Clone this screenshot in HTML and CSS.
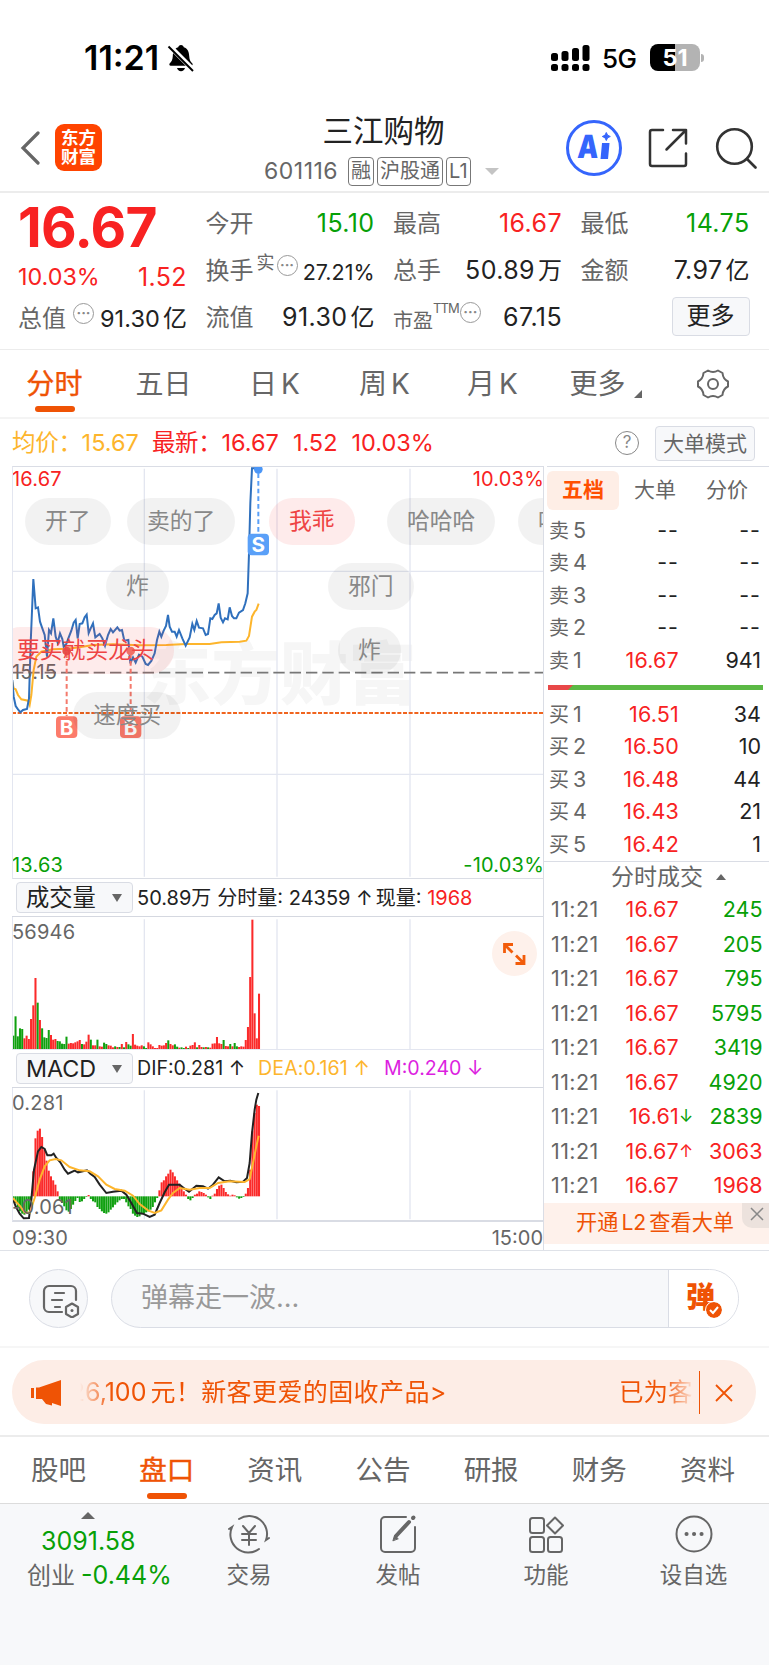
FILE: index.html
```html
<!DOCTYPE html>
<html lang="zh-CN">
<head>
    <meta charset="UTF-8">
    <meta name="viewport" content="width=device-width, initial-scale=1.0">
    <title>三江购物 601116</title>
    <link rel="stylesheet" href="styles.css">
</head>
<body>
    <div class="status-bar">
        <span class="clock">11:21</span>
        <svg class="bell" width="28" height="28" viewBox="0 0 28 28">
            <path d="M14 1c1.600 0 2.600 1 2.800 2.300C20.700 4.600 22 8 22.200 12c.2 4 1.200 5.500 3 7.300.9 1 .4 2.500-1 2.500H3.800c-1.400 0-1.900-1.500-1-2.500 1.800-1.800 2.800-3.300 3-7.300C6 8 7.300 4.600 11.200 3.300 11.400 2 12.400 1 14 1z"/>
            <path d="M10 24h8c-.5 2-2 3.200-4 3.200S10.500 26 10 24z"/>
            <path d="M2 1.500L27 26.500" stroke="#fff" stroke-width="5"/>
            <path d="M1.500 2.500L26 27" stroke="#000" stroke-width="2"/>
        </svg>
        <svg class="signal" width="40" height="28" viewBox="0 0 40 28">
            <rect x="1" y="9" width="7" height="8" rx="2.500"/>
            <rect x="11.500" y="7" width="7" height="10" rx="2.500"/>
            <rect x="22" y="4" width="7" height="13" rx="2.500"/>
            <rect x="32.500" y="1" width="7" height="16" rx="2.500"/>
            <rect x="1" y="20" width="7" height="7" rx="2.500"/>
            <rect x="11.500" y="20" width="7" height="7" rx="2.500"/>
            <rect x="22" y="20" width="7" height="7" rx="2.500"/>
            <rect x="32.500" y="20" width="7" height="7" rx="2.500"/>
        </svg>
        <span class="network">5G</span>
        <span class="battery">51</span>
        <span class="battery-tip"></span>
    </div>

    <header class="header">
        <svg class="back" width="20" height="34" viewBox="0 0 20 34"><path d="M18 2L3 17l15 15" fill="none" stroke="#666" stroke-width="3.200" stroke-linecap="round"/></svg>
        <div class="logo">东方<br>财富</div>
        <div class="stock">
            <h1>三江购物</h1>
            <div class="stock-code">
                <span class="code">601116</span>
                <span class="tag">融</span>
                <span class="tag">沪股通</span>
                <span class="tag">L1</span>
                <i class="down"></i>
            </div>
        </div>
        <svg class="ai" width="58" height="58" viewBox="0 0 58 58">
            <circle cx="29" cy="29" r="26.500" fill="#fff" stroke="#3565fc" stroke-width="3"/>
            <text x="14" y="39" class="ai-text" textLength="21" lengthAdjust="spacingAndGlyphs" transform="skewX(-3)">A</text>
            <path d="M37 24h7.500l-1.500 16h-7.500z" fill="#3565fc"/>
            <path d="M41.300 13.500l1.300 2.700 2.700 1.300-2.700 1.300-1.300 2.700-1.300-2.700-2.700-1.300 2.700-1.300z" fill="#3565fc" stroke="#3565fc"/>
        </svg>
        <svg class="share" width="40" height="40" viewBox="0 0 40 40" fill="none" stroke="#333" stroke-width="2.500" stroke-linecap="round" stroke-linejoin="round">
            <path d="M15 2H4a2 2 0 0 0-2 2v32a2 2 0 0 0 2 2h32a2 2 0 0 0 2-2V25.500"/>
            <path d="M25 2h13v13.500M38 2L18.500 21.500"/>
        </svg>
        <svg class="search" width="42" height="42" viewBox="0 0 42 42" fill="none" stroke="#333" stroke-width="2.600" stroke-linecap="round">
            <circle cx="19.500" cy="19.500" r="17.300"/>
            <path d="M32 32l8.500 8.500"/>
        </svg>
    </header>

    <section class="quote">
        <div class="quote-col main-col">
            <div class="price">16.67</div>
            <div class="row red change"><span>10.03%</span><span class="val">1.52</span></div>
            <div class="row total"><label>总值</label><i class="more-dot">···</i><span class="val sm">91.30<b>亿</b></span></div>
        </div>
        <div class="quote-col">
            <div class="row"><label>今开</label><span class="val green">15.10</span></div>
            <div class="row"><label>换手</label><sup>实</sup><i class="more-dot">···</i><span class="val xs">27.21%</span></div>
            <div class="row"><label>流值</label><span class="val">91.30<b>亿</b></span></div>
        </div>
        <div class="quote-col">
            <div class="row"><label>最高</label><span class="val red">16.67</span></div>
            <div class="row"><label>总手</label><span class="val">50.89<b>万</b></span></div>
            <div class="row"><label class="small">市盈</label><sup class="ttm">TTM</sup><i class="more-dot">···</i><span class="val">67.15</span></div>
        </div>
        <div class="quote-col">
            <div class="row"><label>最低</label><span class="val green">14.75</span></div>
            <div class="row"><label>金额</label><span class="val">7.97<b>亿</b></span></div>
            <div class="row"><button class="btn more-btn">更多</button></div>
        </div>
    </section>

    <nav class="period">
        <span class="active">分时</span>
        <span>五日</span>
        <span>日<b>K</b></span>
        <span>周<b>K</b></span>
        <span>月<b>K</b></span>
        <span class="more">更多</span>
        <svg width="34" height="32" viewBox="0 0 34 32" fill="none" stroke="#666" stroke-width="2" stroke-linejoin="round">
            <path d="M12 2.500q5 3 10 0l4.500 2.500q.5 6 5.500 8.500v5q-5 2.500-5.500 8.500L22 29.500q-5-3-10 0L7.500 27Q7 21 2 18.500v-5Q7 11 7.500 5z"/>
            <circle cx="17" cy="16" r="5"/>
        </svg>
    </nav>

    <div class="summary">
        <span class="avg">均价：</span><span class="avg avg-val">15.67</span>
        <span class="red latest">最新：</span><span class="red">16.67</span><span class="red">1.52</span><span class="red">10.03%</span>
        <i class="help">?</i>
        <button class="btn mode-btn">大单模式</button>
    </div>

    <main class="board">
        <div class="charts">
            <div class="chart price-chart">
                <span class="watermark">东方财富</span>
                <!-- drawn at three units per pixel -->
                <svg width="531" height="412" viewBox="37 18 1593 1236" fill="none">
                    <path d="M434 26V1250M832 26V1250M1231 26V1250M37 334H1630M37 943H1630" stroke="#e3e6f0" stroke-width="4"/>
                    <path d="M37 759H1630" stroke="#f0641e" stroke-width="6" stroke-dasharray="12 5"/>
                    <path d="M37 638H1630" stroke="#777" stroke-width="5" stroke-dasharray="34 15"/>
                    <polyline stroke="#fdb52c" stroke-width="6" points="38,665 42,685 48,688 55,705 65,718 85,722 90,735 95,705 102,630 110,590 125,575 160,568 200,566 240,562 280,555 340,553 420,556 500,555 560,552 630,552 665,547 720,545 740,542 748,528 757,470 765,455 770,450 777,431"/>
                    <polyline stroke="#2f70bd" stroke-width="6" points="38,660 42,710 48,738 55,748 62,757 70,750 82,747 88,715 93,550 101,357 108,445 115,442 121,485 128,505 135,525 142,590 148,510 154,520 161,475 168,530 174,548 181,520 188,537 192,560 200,552 206,535 215,512 222,488 228,480 234,535 240,492 248,490 255,472 261,464 267,519 273,505 280,490 287,532 300,522 308,535 316,557 325,525 333,507 340,517 353,502 360,512 367,510 374,542 386,540 392,610 400,592 408,608 418,584 428,590 438,612 445,615 455,603 465,580 472,540 479,515 485,530 492,512 499,498 505,465 510,500 517,515 525,515 531,530 538,510 548,535 558,557 570,532 578,492 584,510 591,483 598,503 610,505 618,525 625,522 632,475 638,477 645,465 651,460 657,430 663,473 670,487 676,475 684,478 690,442 697,468 703,475 710,475 718,458 730,450 737,430 744,400 748,280 752,130 757,25 776,25"/>
                    <path d="M776 40V220" stroke="#5aa0f8" stroke-width="6" stroke-dasharray="14 9"/>
                    <circle cx="776" cy="28" r="13" fill="#4b96f7"/>
                    <path d="M201 580V768M393 580V768" stroke="#f47a6c" stroke-width="6" stroke-dasharray="14 9"/>
                    <circle cx="201" cy="573" r="13" fill="#e5544d"/>
                    <circle cx="393" cy="573" r="13" fill="#f0776c"/>
                    <g class="mark">
                        <rect x="744" y="221" width="64" height="65" rx="12" fill="#5aa0f8"/>
                        <rect x="169" y="769" width="64" height="65" rx="12" fill="#fc7b6b"/>
                        <rect x="361" y="769" width="64" height="65" rx="12" fill="#fc7b6b"/>
                        <text x="776" y="277">S</text>
                        <text x="201" y="825">B</text>
                        <text x="393" y="825">B</text>
                    </g>
                </svg>
                <span class="lab top-left red">16.67</span>
                <span class="lab top-right red">10.03%</span>
                <span class="lab mid-left">15.15</span>
                <span class="lab bottom-left green">13.63</span>
                <span class="lab bottom-right green">-10.03%</span>
                <span class="danmu d1">开了</span>
                <span class="danmu d2">卖的了</span>
                <span class="danmu d3 hot">我乖</span>
                <span class="danmu d4">哈哈哈</span>
                <span class="danmu d5">哈哈</span>
                <span class="danmu d6">炸</span>
                <span class="danmu d7">邪门</span>
                <span class="danmu d8 hot">要买就买龙头</span>
                <span class="danmu d9">炸</span>
                <span class="danmu d10">速度买</span>
            </div>

            <div class="indicator">
                <span class="select">成交量<i></i></span>
                <span>50.89<b>万</b></span><span class="gap">分时量: 24359 ↑</span><span class="gap now">现量: <em class="red">1968</em></span>
            </div>
            <div class="chart sub-chart">
                <svg width="531" height="133" viewBox="37 141 1593 399">
                    <path d="M434 148V537M832 148V537M1231 148V537" stroke="#e3e6f0" stroke-width="4"/>
                    <g id="volume"></g>
                </svg>
                <span class="lab top-left">56946</span>
                <span class="expand">
                    <svg width="24" height="24" viewBox="0 0 24 24" fill="none" stroke="#f25c0a" stroke-width="2.800"><path d="M2.500 11V2.500H11M2.500 2.500l8 8M22 13v8.500h-8.500M22 21.500l-8-8"/></svg>
                </span>
            </div>

            <div class="indicator macd">
                <span class="select">MACD<i></i></span>
                <span>DIF:0.281 ↑</span><span class="dea">DEA:0.161 ↑</span><span class="m">M:0.240 ↓</span>
            </div>
            <div class="chart sub-chart last">
                <svg width="531" height="133" viewBox="37 655 1593 399" fill="none">
                    <path d="M434 662V1049M832 662V1049M1231 662V1049" stroke="#e3e6f0" stroke-width="4"/>
                    <g id="macd"></g>
                    <polyline stroke="#222" stroke-width="6" points="39,985 48,1010 60,1032 72,1046 88,1045 95,990 103,900 115,845 125,832 135,838 143,857 155,857 162,852 170,865 182,878 195,900 205,912 225,903 235,908 262,902 272,912 285,922 300,945 320,970 340,966 365,963 380,975 395,1000 412,1030 430,1032 450,1042 465,1035 480,1000 495,968 508,945 540,945 555,957 568,966 590,948 610,950 625,957 640,945 657,923 675,935 692,933 710,938 730,936 742,925 750,880 757,790 765,720 770,690 776,670"/>
                    <polyline stroke="#fdb52c" stroke-width="6" points="39,985 60,1008 75,1028 90,1030 105,985 120,930 135,890 150,872 168,868 185,872 210,892 240,902 270,905 295,920 320,945 345,958 375,963 400,978 420,1003 445,1022 465,1030 485,1022 505,990 520,970 540,955 570,960 600,955 630,955 655,940 690,935 735,937 750,928 760,880 770,830 777,798"/>
                </svg>
                <span class="lab top-left">0.281</span>
                <span class="lab bottom-left">-0.061</span>
            </div>
            <div class="axis"><span>09:30</span><span>15:00</span></div>
        </div>

        <aside class="depth">
            <div class="depth-tabs"><span class="active">五档</span><span>大单</span><span>分价</span></div>
            <div class="level"><span>卖<b>5</b></span><span class="none">--</span><span class="none">--</span></div>
            <div class="level"><span>卖<b>4</b></span><span class="none">--</span><span class="none">--</span></div>
            <div class="level"><span>卖<b>3</b></span><span class="none">--</span><span class="none">--</span></div>
            <div class="level"><span>卖<b>2</b></span><span class="none">--</span><span class="none">--</span></div>
            <div class="level"><span>卖<b>1</b></span><span class="red">16.67</span><span>941</span></div>
            <div class="ratio"><i></i></div>
            <div class="level"><span>买<b>1</b></span><span class="red">16.51</span><span>34</span></div>
            <div class="level"><span>买<b>2</b></span><span class="red">16.50</span><span>10</span></div>
            <div class="level"><span>买<b>3</b></span><span class="red">16.48</span><span>44</span></div>
            <div class="level"><span>买<b>4</b></span><span class="red">16.43</span><span>21</span></div>
            <div class="level"><span>买<b>5</b></span><span class="red">16.42</span><span>1</span></div>
            <div class="ticks-title">分时成交<i></i></div>
            <div class="tick"><span>11:21</span><span class="red">16.67</span><span class="green">245</span></div>
            <div class="tick"><span>11:21</span><span class="red">16.67</span><span class="green">205</span></div>
            <div class="tick"><span>11:21</span><span class="red">16.67</span><span class="green">795</span></div>
            <div class="tick"><span>11:21</span><span class="red">16.67</span><span class="green">5795</span></div>
            <div class="tick"><span>11:21</span><span class="red">16.67</span><span class="green">3419</span></div>
            <div class="tick"><span>11:21</span><span class="red">16.67</span><span class="green">4920</span></div>
            <div class="tick"><span>11:21</span><span class="red">16.61<em class="green">↓</em></span><span class="green">2839</span></div>
            <div class="tick"><span>11:21</span><span class="red">16.67<em>↑</em></span><span class="red">3063</span></div>
            <div class="tick"><span>11:21</span><span class="red">16.67</span><span class="red">1968</span></div>
            <div class="l2">开通<b>L2</b>查看大单
                <span class="l2-close"><svg width="14" height="14" viewBox="0 0 14 14" stroke="#888" stroke-width="1.500"><path d="M1 1l12 12M13 1L1 13"/></svg></span>
            </div>
        </aside>
    </main>

    <div class="comment">
        <span class="comment-set">
            <svg width="38" height="34" viewBox="0 0 38 34" fill="none" stroke="#666" stroke-width="2.200" stroke-linecap="round">
                <path d="M20 28H7a5 5 0 0 1-5-5V7a5 5 0 0 1 5-5h22a5 5 0 0 1 5 5v9"/>
                <path d="M13 9h9M10 16h10M13 23h5"/>
                <path d="M30 19.500l6 3.500v7l-6 3.500-6-3.500v-7z" stroke-linejoin="round"/>
                <circle cx="30" cy="26.500" r="1.500" fill="#666" stroke="none"/>
            </svg>
        </span>
        <div class="comment-input">
            <span class="placeholder">弹幕走一波...</span>
            <span class="send">弹<i><svg width="14" height="14" viewBox="0 0 14 14" fill="none" stroke="#fff" stroke-width="2"><path d="M3 7l3 3 5-6"/></svg></i></span>
        </div>
    </div>

    <div class="notice">
        <svg width="30" height="28" viewBox="0 0 30 28" fill="#ef5305"><path d="M0 9h3v10H0zM5 8.500h3L30 1v26l-9-3v2.500l-6-1.500-4-5H5z"/></svg>
        <span class="notice-text"><span class="cut">2</span>6,100<b>元！新客更爱的固收产品&gt;</b></span>
        <span class="notice-next">已为客户</span>
        <svg class="x" width="18" height="18" viewBox="0 0 18 18" stroke="#ef5305" stroke-width="1.800"><path d="M1 1l16 16M17 1L1 17"/></svg>
    </div>

    <nav class="tabs">
        <span>股吧</span>
        <span class="active">盘口</span>
        <span>资讯</span>
        <span>公告</span>
        <span>研报</span>
        <span>财务</span>
        <span>资料</span>
    </nav>

    <footer class="footer">
        <div class="index">
            <i></i>
            <div class="green">3091.58</div>
            <div>创业<span class="green">-0.44%</span></div>
        </div>
        <div class="action">
            <svg width="44" height="40" viewBox="0 0 44 40" fill="none" stroke="#666" stroke-width="2" stroke-linecap="round">
                <path d="M12 5A18 18 0 0 1 39 26l3-2M32 35A18 18 0 0 1 5 13l-3 2"/>
                <path d="M16 12l6 7 6-7M22 19v12M15 20h14M15 26h14"/>
            </svg>
            <span>交易</span>
        </div>
        <div class="action">
            <svg width="40" height="40" viewBox="0 0 40 40" fill="none" stroke="#666" stroke-width="2" stroke-linecap="round">
                <path d="M28 3H7a4 4 0 0 0-4 4v27a4 4 0 0 0 4 4h26a4 4 0 0 0 4-4V13"/>
                <path d="M18 22l13-14" stroke-width="4"/><path d="M15 26.500l1.500-5 3.500 3z" fill="#666" stroke-width="1"/><path d="M35.500 3.500l-.5.500" stroke-width="4"/>
            </svg>
            <span>发帖</span>
        </div>
        <div class="action">
            <svg width="40" height="40" viewBox="0 0 40 40" fill="none" stroke="#666" stroke-width="2" stroke-linejoin="round">
                <rect x="4" y="4" width="14" height="15" rx="2.500"/>
                <rect x="4" y="23" width="14" height="15" rx="2.500"/>
                <rect x="22" y="23" width="14" height="15" rx="2.500"/>
                <path d="M29 3.500l8 8-8 8-8-8z"/>
            </svg>
            <span>功能</span>
        </div>
        <div class="action">
            <svg width="40" height="40" viewBox="0 0 40 40" fill="none" stroke="#666" stroke-width="2">
                <circle cx="20" cy="20" r="17.500"/>
                <path d="M12.500 20h.1M20 20h.1M27.500 20h.1" stroke-width="4" stroke-linecap="round"/>
            </svg>
            <span>设自选</span>
        </div>
    </footer>
    <script src="script.js"></script>
</body>
</html>
```
FILE: styles.css
```css
* {
    box-sizing: border-box;
}

body {
    margin: 0;
    width: 769px;
    height: 1665px;
    font-family: Inter, "Noto Sans CJK SC", sans-serif;
    font-size: 24px;
    line-height: 1;
    color: #222;
    background-color: #fff;
    overflow: hidden;
}

b, i, em, sup {
    font-weight: inherit;
    font-style: normal;
}

svg {
    display: block;
    flex: none;
}

.red {
    color: #f82222;
}

.green {
    color: #07a007;
}

.btn {
    border: 1px solid #d9dce4;
    border-radius: 4px;
    background-color: #f7f8fa;
    font-family: inherit;
    padding: 0;
    line-height: 1;
    white-space: nowrap;
}

/* status bar */
.status-bar {
    display: flex;
    align-items: center;
    height: 115px;
    padding: 0 65px 0 84px;
    color: #000;
}

.clock {
    font-size: 34px;
    font-weight: 600;
    letter-spacing: 0;
    width: 83px;
    margin-top: 1px;
}

.signal {
    margin-left: auto;
}

.network {
    font-size: 26px;
    font-weight: 500;
    letter-spacing: -0.5px;
    margin: 2px 0 0 12px;
    width: 48px;
}

.battery {
    width: 50px;
    height: 27px;
    border-radius: 8px;
    background: linear-gradient(90deg, #000 50%, #b3b3b3 50%);
    color: #fff;
    font-size: 23.500px;
    font-weight: 700;
    line-height: 28px;
    text-align: center;
}

.battery-tip {
    width: 3px;
    height: 8px;
    margin-left: 1px;
    border-radius: 0 4px 4px 0;
    background-color: #b3b3b3;
}

/* header */
.header {
    display: flex;
    align-items: center;
    height: 78px;
    padding: 0 12px 12px 20px;
    border-bottom: 2px solid #ececec;
}

.header > svg,
.logo {
    margin-top: 1px;
}

.logo {
    width: 47px;
    height: 47px;
    margin-left: 15px;
    padding-top: 4px;
    border-radius: 9px;
    background-color: #ff4400;
    color: #fff;
    font-size: 17.500px;
    font-weight: 700;
    line-height: 19px;
    text-align: center;
}

.stock {
    width: 240px;
    margin-left: 162px;
    padding-top: 9px;
}

.stock h1 {
    margin: -1px 0 0 -1px;
    font-size: 30.500px;
    font-weight: 400;
    line-height: 40px;
    text-align: center;
}

.stock-code {
    display: flex;
    align-items: center;
    gap: 3px;
    height: 40px;
    color: #666;
}

.code {
    font-size: 23px;
    width: 81px;
    letter-spacing: 0.5px;
}

.tag {
    height: 29px;
    border: 1.500px solid #777;
    border-radius: 4px;
    padding: 0 2px;
    font-size: 20px;
    line-height: 26px;
}

.down {
    margin-left: 11px;
    border: 7px solid transparent;
    border-top: 7px solid #c4c4c4;
    border-bottom: 0;
}

.ai {
    margin-left: 61px;
}

.ai-text {
    font-size: 32px;
    font-weight: 900;
    fill: #3565fc;
}

.share {
    margin-left: 25px;
}

.search {
    margin-left: auto;
}

/* quote */
.quote {
    display: grid;
    grid-template-columns: repeat(4, 169px);
    column-gap: 18.500px;
    height: 157px;
    padding: 7px 0 0 18px;
    border-bottom: 1px solid #ececec;
}

.row {
    display: flex;
    align-items: center;
    height: 47px;
    white-space: nowrap;
}

.row label {
    color: #666;
}

.row label.small {
    font-size: 20px;
    padding-top: 6px;
}

.row sup {
    color: #666;
    font-size: 18px;
    margin: -16px 2px 0 3px;
    line-height: 20px;
}

.row sup.ttm {
    font-size: 13px;
    letter-spacing: -0.9px;
    margin: -20px 1px 0 0;
}

.more-dot {
    width: 21px;
    height: 21px;
    margin-top: -11px;
    border: 1.500px solid #999;
    border-radius: 50%;
    color: #888;
    font-size: 14px;
    font-weight: 700;
    line-height: 18px;
    text-align: center;
}

.total .more-dot {
    margin-left: 7px;
}

.val {
    margin-left: auto;
    font-size: 25px;
    letter-spacing: 0.4px;
}

.val b {
    margin-left: 3px;
    font-size: 24px;
    letter-spacing: 0;
}

.val.sm {
    font-size: 23.500px;
    letter-spacing: 0.1px;
}

.val.xs {
    font-size: 21.500px;
    letter-spacing: 0;
    padding-top: 5px;
}

.price {
    height: 54px;
    font-size: 55px;
    font-weight: 700;
    line-height: 54px;
    letter-spacing: -0.7px;
    color: #f82222;
}

.change {
    height: 46px;
    font-size: 23.300px;
}

.total {
    height: 38px;
}

.more-btn {
    width: 79px;
    height: 39px;
    margin: -3px 0 0 91px;
    font-size: 24px;
    color: #222;
}

/* period tabs */
.period {
    display: grid;
    grid-template-columns: 109px 109px 113px 107px 109px 123px 60px;
    align-items: center;
    height: 69px;
    border-bottom: 2px solid #f4f4f4;
    font-size: 28px;
    color: #666;
    text-align: center;
}

.period svg {
    margin-left: 26px;
}

.period b {
    margin-left: 4px;
}

.period span {
    position: relative;
}

.period .active,
.tabs .active {
    color: #ef5305;
    -webkit-text-stroke: 0.4px #ef5305;
}

.period .active::after,
.tabs .active::after {
    content: "";
    position: absolute;
    left: 50%;
    bottom: -14px;
    width: 40px;
    height: 6px;
    margin-left: -20px;
    border-radius: 3px;
    background-color: #ef5305;
}

.period .more {
    padding-right: 22px;
}

.period .more::after {
    content: "";
    position: absolute;
    right: 28px;
    bottom: 0;
    border-left: 8px solid transparent;
    border-bottom: 8px solid #666;
}

/* summary */
.summary {
    display: flex;
    align-items: center;
    height: 47px;
    padding: 1px 14px 0 12px;
    font-size: 23.500px;
    white-space: nowrap;
}

.summary .red {
    margin-right: 14px;
}

.summary .latest {
    margin-right: 0;
}

.avg {
    color: #fdb52c;
}

.latest,
.avg:first-child {
    letter-spacing: -0.3px;
}

.avg-val {
    margin: 0 13px 0 0;
}

.help {
    width: 24px;
    height: 24px;
    margin-left: auto;
    border: 1.500px solid #888;
    border-radius: 50%;
    color: #888;
    font-size: 17px;
    line-height: 21px;
    text-align: center;
}

.mode-btn {
    width: 100px;
    height: 35px;
    margin-left: 16px;
    font-size: 21px;
    color: #666;
}

/* charts */
.board {
    display: flex;
    height: 785px;
    border-bottom: 1.500px solid #dfe2e8;
}

.charts {
    width: 532px;
    margin-left: 12px;
    border-right: 1px solid #dadde5;
}

.chart {
    position: relative;
    border-left: 1px solid #e3e6f0;
    overflow: hidden;
}

.chart svg {
    margin-left: -0.700px;
}

.price-chart {
    height: 413px;
    border-top: 1px solid #dadde5;
    border-bottom: 1px solid #dadde5;
}

.watermark {
    position: absolute;
    left: 130px;
    top: 173px;
    font-size: 68px;
    font-weight: 900;
    color: #f6f6f6;
    letter-spacing: 0.5px;
}

.price-chart svg {
    position: relative;
    margin-top: -1px;
}

.mark text {
    font-size: 62px;
    font-weight: 700;
    fill: #fff;
    text-anchor: middle;
}

.lab {
    position: absolute;
    font-size: 20px;
    letter-spacing: 0.2px;
}

.lab:not(.red):not(.green) {
    color: #666;
}

.top-left {
    top: 2px;
    left: -1px;
}

.top-right {
    top: 2px;
    right: -1px;
}

.mid-left {
    top: 195px;
    left: -1px;
}

.bottom-left {
    bottom: 3px;
    left: -1px;
}

.bottom-right {
    bottom: 3px;
    right: -1px;
}

.danmu {
    position: absolute;
    height: 47px;
    padding: 0 20px;
    border-radius: 24px;
    background-color: rgba(0, 0, 0, 0.05);
    color: #888;
    font-size: 22.800px;
    line-height: 46px;
    white-space: nowrap;
}

.danmu.hot {
    background-color: rgba(245, 60, 60, 0.1);
    color: #ee4444;
}

.d1 { left: 12px; top: 31px; }
.d2 { left: 114px; top: 31px; }
.d3 { left: 256px; top: 31px; }
.d4 { left: 374px; top: 31px; }
.d5 { left: 505px; top: 31px; }
.d6 { left: 93px; top: 96px; }
.d7 { left: 315px; top: 96px; }
.d8 { left: -16px; top: 160px; }
.d9 { left: 325px; top: 160px; }
.d10 { left: 60px; top: 225px; }

.indicator {
    display: flex;
    align-items: center;
    height: 38px;
    padding-left: 4px;
    border-bottom: 1px solid #d5d8e0;
    font-size: 20px;
    white-space: nowrap;
}

.gap {
    margin-left: 6px;
}

.now {
    margin-left: 3px;
}

.indicator.macd {
    font-size: 19.600px;
}

.dea {
    margin-left: 13px;
    color: #fdb52c;
    letter-spacing: 0.1px;
}

.m {
    margin-left: 14px;
    color: #dc1fe0;
}

.select {
    display: flex;
    align-items: center;
    justify-content: space-between;
    width: 117px;
    height: 31px;
    margin-right: 4px;
    padding: 0 10px 0 9px;
    border: 1px solid #d9dce4;
    border-radius: 4px;
    background-color: #f7f8fa;
    font-size: 23.300px;
}

.select i {
    border: 5px solid transparent;
    border-top: 8px solid #666;
    border-bottom: 0;
}

.sub-chart {
    height: 133px;
    border-bottom: 1px solid #e3e6f0;
}

.sub-chart .top-left {
    top: 5px;
}

.sub-chart.last {
    height: 134px;
    border-bottom: 2px solid #d9dce4;
}

.expand {
    position: absolute;
    right: 6px;
    top: 14px;
    width: 45px;
    height: 45px;
    border-radius: 50%;
    background-color: #fef1eb;
    padding: 11px;
}

.axis {
    display: flex;
    justify-content: space-between;
    padding-top: 6px;
    font-size: 20px;
    color: #666;
}

/* order book */
.depth {
    width: 225px;
}

.depth-tabs {
    display: flex;
    align-items: center;
    height: 48px;
    margin: 0 0 0 3px;
    border-top: 1px solid #dadde5;
    font-size: 21px;
    color: #666;
}

.depth-tabs span {
    width: 72px;
    height: 39px;
    line-height: 38px;
    text-align: center;
}

.depth-tabs .active {
    border-radius: 6px;
    background-color: #feeee6;
    color: #ff5000;
    font-weight: 700;
}

.level,
.tick {
    display: grid;
    grid-template-columns: 60px 70px 82px;
    align-items: center;
    height: 32.600px;
    padding-left: 5px;
    font-size: 21.500px;
    text-align: right;
}

.level .red,
.tick .red:nth-child(2) {
    letter-spacing: 0.2px;
}

.level span:first-child,
.tick span:first-child {
    color: #666;
    text-align: left;
}

.level span:first-child {
    font-size: 20px;
}

.level b {
    margin-left: 4px;
    font-size: 21.500px;
}

.none {
    letter-spacing: 1px;
}

.ratio {
    height: 5px;
    margin: 8px 6px 8px 4px;
    background-color: #5bb945;
}

.ratio i {
    display: block;
    width: 25px;
    height: 5px;
    background-color: #e84848;
    clip-path: polygon(0 0, 100% 0, 80% 100%, 0 100%);
}

.ticks-title {
    display: flex;
    align-items: center;
    justify-content: center;
    height: 32px;
    padding-left: 24px;
    border-top: 1px solid #dadde5;
    color: #666;
    font-size: 23px;
}

.ticks-title i {
    margin-left: 13px;
    border: 5px solid transparent;
    border-bottom: 6px solid #666;
    border-top: 0;
}

.tick {
    grid-template-columns: 60px 70px 83.500px;
    height: 34.500px;
}

.tick span {
    position: relative;
}

.tick span:first-child {
    padding-left: 2px;
    letter-spacing: 0.4px;
}

.tick em {
    position: absolute;
    left: 100%;
    top: 2px;
    font-size: 17px;
}

.l2 {
    position: relative;
    height: 41px;
    padding-left: 32px;
    background-color: #fef1eb;
    color: #ef5305;
    font-size: 21.200px;
    line-height: 38px;
}

.l2 b {
    margin: 0 3px;
}

.l2-close {
    position: absolute;
    right: 0;
    top: 0;
    width: 27px;
    height: 25px;
    padding: 4px 0 0 8px;
    border-radius: 0 0 0 10px;
    background-color: #ece2dd;
}

/* comment bar */
.comment {
    display: flex;
    align-items: center;
    height: 97px;
    padding: 0 30px 0 29px;
    border-bottom: 2px solid #f6f6f6;
}

.comment-set {
    width: 59px;
    height: 59px;
    padding: 14px 0 0 12px;
    border: 1px solid #dadde5;
    border-radius: 50%;
    background-color: #f7f8fa;
}

.comment-input {
    display: flex;
    flex: 1;
    height: 59px;
    margin-left: 23px;
    border: 1px solid #dadde5;
    border-radius: 30px;
    background-color: #f7f8fa;
    overflow: hidden;
}

.placeholder {
    flex: 1;
    padding-left: 29px;
    color: #999;
    font-size: 27px;
    line-height: 55px;
}

.send {
    position: relative;
    width: 70px;
    padding-left: 17px;
    border-left: 1px solid #dadde5;
    background-color: #fff;
    color: #ef5305;
    font-size: 29px;
    font-weight: 900;
    line-height: 56px;
}

.send i {
    position: absolute;
    left: 37px;
    top: 32px;
    width: 16px;
    height: 16px;
    padding: 1px;
    border-radius: 50%;
    background-color: #ef5305;
    outline: 1.500px solid #fff;
}

/* notice */
.notice {
    display: flex;
    align-items: center;
    width: 744px;
    height: 64px;
    margin: 12px 0 11px 12px;
    padding: 1px 23px 0 19px;
    border-radius: 32px;
    background-color: #fdede6;
    color: #ef5305;
    font-size: 25px;
    white-space: nowrap;
}

.notice-text {
    display: flex;
    align-items: center;
    margin-left: 19px;
    -webkit-mask-image: linear-gradient(90deg, transparent, #000 32px);
    mask-image: linear-gradient(90deg, transparent, #000 32px);
}

.cut {
    width: 5px;
    direction: rtl;
    overflow: hidden;
}

.notice-text b {
    margin-left: 4px;
    letter-spacing: 0.400px;
}

.notice-next {
    width: 81px;
    margin-left: auto;
    padding: 9px 0;
    border-right: 1.500px solid #ef5305;
    overflow: hidden;
    font-size: 24.500px;
    background: linear-gradient(90deg, #ef5305 45px, #fdede6 76px);
    -webkit-background-clip: text;
    background-clip: text;
    color: transparent;
}

.x {
    margin-left: 15px;
}

/* section tabs */
.tabs {
    display: flex;
    justify-content: space-between;
    align-items: center;
    height: 69px;
    padding: 2px 34px 0 31px;
    border-top: 2px solid #ececec;
    border-bottom: 1.500px solid #dcdcdc;
    font-size: 27.500px;
    color: #666;
}

.tabs span {
    position: relative;
}

/* footer */
.footer {
    display: grid;
    grid-template-columns: 174px 150px 148px 148px 147px;
    height: 161px;
    background-color: #f7f8fa;
    color: #666;
    text-align: center;
}

.index {
    padding: 8px 0 0 27px;
}

.index i {
    display: block;
    width: 0;
    margin: 0 0 9px 54px;
    border: 7px solid transparent;
    border-bottom: 7px solid #666;
    border-top: 0;
}

.index div {
    height: 34px;
    line-height: 26px;
    text-align: left;
    white-space: nowrap;
}

.index div.green {
    padding-left: 14px;
    font-size: 25px;
}

.index span {
    margin-left: 6px;
    font-size: 25px;
}

.action {
    display: flex;
    flex-direction: column;
    align-items: center;
    padding-top: 10px;
    font-size: 22.500px;
}

.action span {
    margin-top: 10px;
}
```
FILE: script.js
```js
// volume per minute, then 1 = up / 0 = down
var volume = [40, 98, 38, 62, 60, 32, 40, 30, 90, 131, 213, 139, 87, 62, 35, 33, 57, 42, 28, 30, 24, 23, 16, 15, 37, 16, 18, 17, 20, 23, 27, 15, 14, 22, 43, 28, 11, 11, 28, 8, 7, 19, 15, 11, 10, 5, 8, 6, 6, 15, 5, 21, 14, 10, 45, 13, 10, 8, 11, 8, 3, 20, 14, 8, 3, 3, 12, 10, 11, 18, 26, 15, 11, 14, 7, 4, 5, 3, 7, 3, 10, 12, 20, 5, 12, 6, 5, 6, 5, 4, 16, 17, 36, 17, 15, 27, 9, 8, 15, 8, 18, 8, 6, 8, 7, 27, 66, 216, 388, 107, 32, 166];
var up = '0000011111101000011100000111111011101101100111010101001111100111111111011001001011101101011111101101001111111111';
var macd = [-5, -20, -33, -45, -52, -55, -50, -40, -22, 75, 174, 197, 203, 178, 140, 107, 77, 60, 48, 35, 15, -10, -20, -30, -42, -46, -38, -25, -14, -5, -17, -15, -8, -2, 4, -8, -15, -18, -32, -38, -45, -50, -52, -48, -40, -33, -25, -18, -12, -8, -8, -18, -30, -38, -52, -58, -62, -60, -50, -52, -48, -45, -40, -32, -18, -5, 18, 42, 48, 60, 68, 80, 72, 60, 48, 38, 28, 15, 5, -8, -12, -5, 5, 8, 15, 13, 10, 5, -3, -8, 2, 8, 22, 32, 35, 25, 13, 6, 2, 5, 3, -3, -7, -5, -2, 8, 25, 80, 195, 250, 275, 271];

function bars(id, data, base, isUp) {
    var html = '';
    for (var i = 0; i < data.length; i++) {
        var h = Math.abs(data[i]);
        var y = data[i] > 0 ? base - h : base;
        html += '<rect x="' + (38 + i * 6.64).toFixed(1) + '" y="' + y + '" width="6.1" height="' + h + '" fill="' + (isUp(i) ? '#fb2a2a' : '#10a010') + '"/>';
    }
    document.getElementById(id).innerHTML = html;
}

bars('volume', volume, 537, function (i) { return up[i] === '1'; });
bars('macd', macd, 980, function (i) { return macd[i] > 0; });
```
